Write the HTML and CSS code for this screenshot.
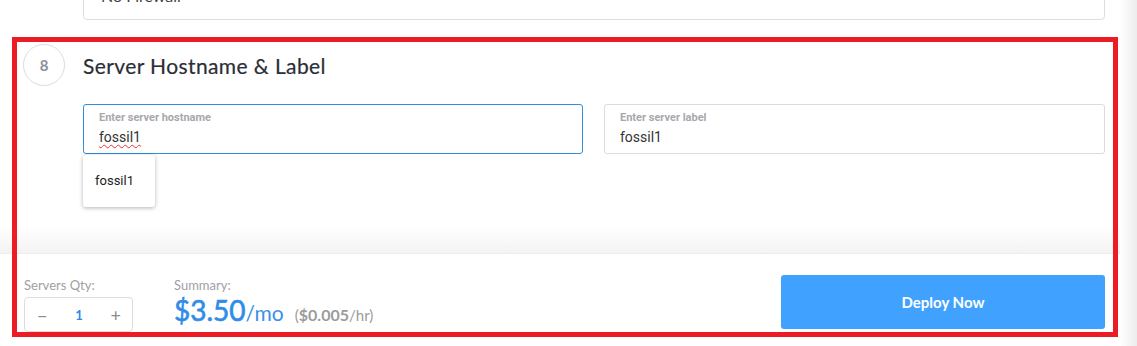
FILE: index.html
```html
<!DOCTYPE html>
<html lang="en">
<head>
    <meta charset="UTF-8">
    <meta name="viewport" content="width=device-width, initial-scale=1.0">
    <title>Deploy Server</title>
    <link rel="stylesheet" href="styles.css">
</head>
<body>
    <div class="page">
        <div class="main">
            <div class="prev-card">
                <span class="prev-text">No Firewall</span>
            </div>

            <div class="step">
                <div class="step-head">
                    <div class="step-num">8</div>
                    <h2 class="step-title">Server Hostname &amp; Label</h2>
                </div>

                <div class="fields">
                    <div class="field focused">
                        <label class="field-label">Enter server hostname</label>
                        <div class="field-value"><span class="spell">fossil1</span></div>
                        <div class="suggest">fossil1</div>
                    </div>
                    <div class="field">
                        <label class="field-label">Enter server label</label>
                        <div class="field-value">fossil1</div>
                    </div>
                </div>
            </div>

            <div class="footer">
                <div class="qty">
                    <div class="foot-label">Servers Qty:</div>
                    <div class="qty-box">
                        <span class="qty-btn">&minus;</span>
                        <span class="qty-val">1</span>
                        <span class="qty-btn">+</span>
                    </div>
                </div>
                <div class="summary">
                    <div class="foot-label">Summary:</div>
                    <div class="price">
                        <span class="price-big">$3.50</span><span class="price-unit">/mo</span>
                        <span class="price-hr">(<b>$0.005</b>/hr)</span>
                    </div>
                </div>
                <button class="deploy">Deploy Now</button>
            </div>

            <div class="highlight"></div>
        </div>
        <div class="edge"></div>
    </div>
</body>
</html>
```

FILE: styles.css
```css
body {
    margin: 0;
    background: #ffffff;
    font-family: "Open Sans", Arial, sans-serif;
    overflow: hidden;
}
.page {
    display: flex;
    width: 1137px;
    height: 346px;
    overflow: hidden;
}
.main {
    position: relative;
    width: 1120px;
    display: flex;
    flex-direction: column;
}
.edge {
    width: 17px;
    background: linear-gradient(to right, #ffffff, #ececec);
}
.prev-card {
    margin: -30px 0 0 83px;
    width: 1022px;
    height: 50px;
    flex-shrink: 0;
    border: 1px solid #dedede;
    border-radius: 4px;
    box-sizing: border-box;
    padding: 14px 0 0 17px;
}
.prev-text {
    font-family: Lato, sans-serif;
    font-size: 16px;
    color: #444;
}
.step {
    padding: 24px 0 0 23px;
    height: 233px;
    flex-shrink: 0;
    box-sizing: border-box;
    background: linear-gradient(to bottom, #ffffff 0, #ffffff 205px, #f3f3f3 233px);
}
.step-head {
    display: flex;
    align-items: center;
    gap: 18px;
}
.step-num {
    width: 40px;
    height: 40px;
    border: 1px solid #dcdde0;
    border-radius: 50%;
    display: flex;
    align-items: center;
    justify-content: center;
    font-family: Lato, sans-serif;
    font-weight: bold;
    font-size: 15px;
    color: #8a8f98;
}
.step-title {
    margin: 0;
    font-family: Lato, sans-serif;
    font-weight: normal;
    font-size: 21px;
    color: #2a2e36;
    letter-spacing: 0.4px;
    -webkit-text-stroke: 0.2px #2a2e36;
}
.fields {
    display: flex;
    gap: 21px;
    margin: 18px 0 0 60px;
}
.field {
    position: relative;
    width: 501px;
    height: 50px;
    box-sizing: border-box;
    border: 1px solid #dcdcdc;
    border-radius: 3px;
    padding: 6px 0 0 15px;
}
.field.focused {
    width: 500px;
    border-color: #2f8fde;
}
.field-label {
    display: block;
    font-family: Roboto, sans-serif;
    font-size: 11px;
    font-weight: bold;
    color: #a6a8ad;
    line-height: 14px;
}
.field-value {
    font-family: Roboto, sans-serif;
    font-size: 14px;
    color: #333;
    line-height: 20px;
    margin-top: 2px;
}
.spell {
    text-decoration: underline wavy #e33;
    text-decoration-thickness: 1px;
    text-underline-offset: 2px;
}
.suggest {
    position: absolute;
    left: -1px;
    top: 50px;
    width: 72px;
    height: 52px;
    box-sizing: border-box;
    background: #ffffff;
    border-radius: 3px;
    box-shadow: 0 1px 4px rgba(0, 0, 0, 0.3);
    padding: 18px 0 0 12px;
    font-family: Roboto, sans-serif;
    font-size: 13px;
    color: #222;
    z-index: 2;
}
.footer {
    display: flex;
    align-items: flex-start;
    flex: 1;
    padding: 22px 15px 0 24px;
    box-sizing: border-box;
    background: #ffffff;
    border-top: 1px solid #ececec;
}
.foot-label {
    font-family: Lato, sans-serif;
    font-size: 13px;
    color: #a0a0a4;
    line-height: 18px;
}
.qty {
    width: 150px;
}
.qty-box {
    margin-top: 3px;
    width: 109px;
    height: 35px;
    box-sizing: border-box;
    border: 1px solid #dcdcdc;
    border-radius: 4px;
    display: flex;
    align-items: center;
    justify-content: space-between;
    padding: 0 11px 0 12px;
}
.qty-btn {
    font-family: Lato, sans-serif;
    font-size: 18px;
    color: #8b8b8b;
}
.qty-val {
    font-family: Lato, sans-serif;
    font-weight: bold;
    font-size: 13px;
    color: #2d8ae8;
}
.summary {
    flex: 1;
}
.price {
    margin-top: -1px;
    font-family: Lato, sans-serif;
    white-space: nowrap;
}
.price-big {
    font-size: 28px;
    color: #2f8ce9;
    -webkit-text-stroke: 0.6px #2f8ce9;
}
.price-unit {
    font-size: 21px;
    color: #3b90e8;
}
.price-hr {
    margin-left: 7px;
    font-size: 15px;
    color: #9b9b9b;
}
.price-hr b {
    font-size: 16px;
}
.deploy {
    margin-top: -1px;
    width: 324px;
    height: 54px;
    border: none;
    border-radius: 3px;
    background: #40a2fe;
    color: #ffffff;
    font-family: Lato, sans-serif;
    font-weight: bold;
    font-size: 15px;
    cursor: pointer;
}
.highlight {
    position: absolute;
    left: 12px;
    top: 37px;
    width: 1106px;
    height: 300px;
    box-sizing: border-box;
    border: 5px solid #ed1c24;
    pointer-events: none;
}
```
